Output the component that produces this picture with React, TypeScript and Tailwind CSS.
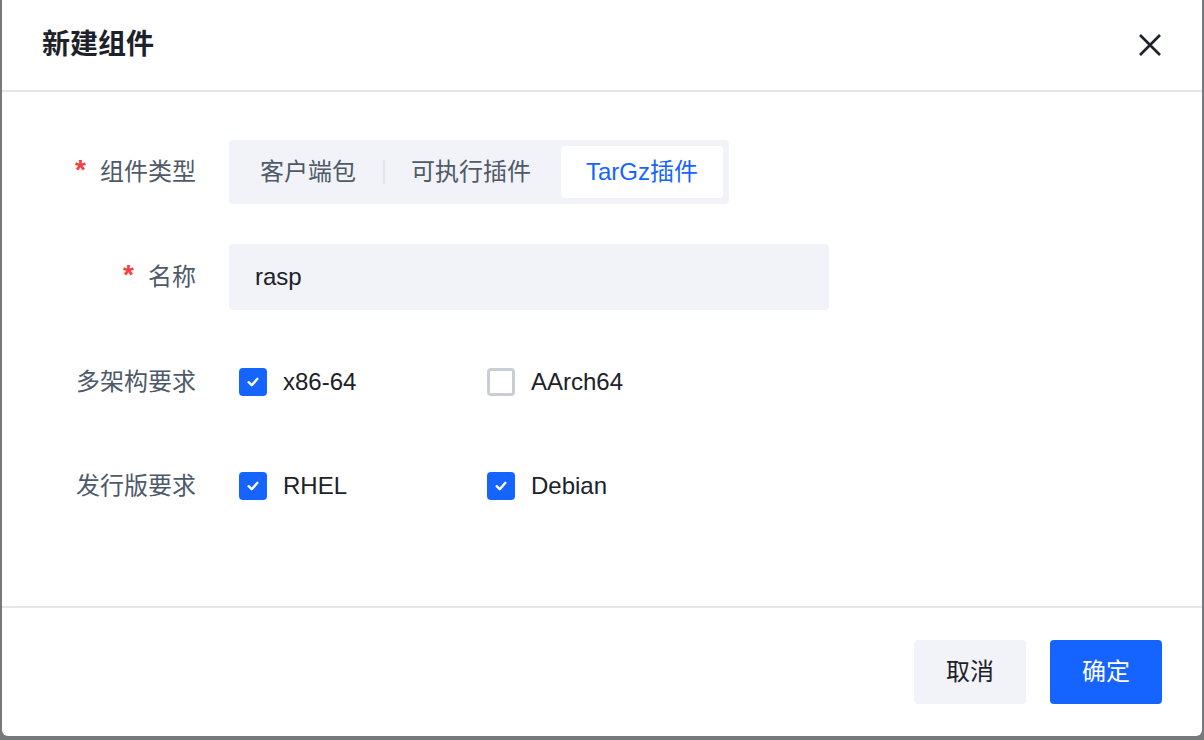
import { useState } from "react";

const font = {
  fontFamily: '"Liberation Sans", "Noto Sans CJK SC", sans-serif',
};

const Check = ({ checked, label }: { checked: boolean; label: string }) => (
  <div className="flex w-[248px] items-center gap-4">
    {checked ? (
      <span className="flex h-[28px] w-[28px] items-center justify-center rounded-[4px] bg-[#1664ff]">
        <svg width="16" height="16" viewBox="0 0 16 16" fill="none">
          <path
            d="M3.6 8.2 L6.8 11.2 L12.4 4.8"
            stroke="#fff"
            strokeWidth="2.4"
            strokeLinecap="round"
            strokeLinejoin="round"
          />
        </svg>
      </span>
    ) : (
      <span className="h-[28px] w-[28px] rounded-[4px] border-[3px] border-[#c9cdd4] bg-white" />
    )}
    <span className="text-[24px] text-[#1d2129]">{label}</span>
  </div>
);

const Label = ({ text, required }: { text: string; required?: boolean }) => (
  <div className="flex w-[154px] shrink-0 items-center justify-end text-[24px] text-[#4e5969]">
    {required && (
      <span className="mr-[14px] mt-[-4px] text-[28px] font-bold leading-none text-[#f53f3f]">*</span>
    )}
    {text}
  </div>
);

export default function App() {
  const [kind] = useState(2);
  const tabs = ["客户端包", "可执行插件", "TarGz插件"];

  return (
    <div className="flex h-[740px] w-full bg-[#77797c] pb-[4px] pl-[2px] pr-[2px]" style={font}>
      <div className="flex flex-1 flex-col rounded-b-[6px] bg-white">
        <div className="flex h-[92px] items-center justify-between border-b-2 border-[#e5e6eb] px-[40px]">
          <h1 className="text-[28px] font-semibold text-[#1d2129]">新建组件</h1>
          <svg width="24" height="24" viewBox="0 0 24 24">
            <path d="M2 2 L22 22 M22 2 L2 22" stroke="#1d2129" strokeWidth="2.6" />
          </svg>
        </div>

        <div className="flex flex-1 flex-col gap-10 px-[40px] pt-[48px]">
          <div className="flex h-[64px] items-center gap-[33px]">
            <Label text="组件类型" required />
            <div className="flex h-[64px] items-center rounded-[4px] bg-[#f2f3f8] p-[6px]">
              {tabs.map((t, i) => (
                <div key={t} className="flex h-full items-center">
                  {i > 0 && (
                    <div className="flex h-full w-[5px] items-center justify-center">
                      {i !== kind && i - 1 !== kind && <span className="h-[24px] w-[2px] bg-[#e5e6eb]" />}
                    </div>
                  )}
                  <div
                    className={
                      i === kind
                        ? "flex h-full items-center rounded-[4px] bg-white px-[25px] text-[24px] text-[#1664ff]"
                        : "flex h-full items-center px-[25px] text-[24px] text-[#4e5969]"
                    }
                  >
                    {t}
                  </div>
                </div>
              ))}
            </div>
          </div>

          <div className="flex h-[66px] items-center gap-[33px]">
            <Label text="名称" required />
            <div className="flex h-[66px] w-[600px] items-center rounded-[4px] bg-[#f2f3f8] px-[26px] text-[24px] text-[#1d2129]">
              rasp
            </div>
          </div>

          <div className="flex h-[64px] items-center gap-[33px]">
            <Label text="多架构要求" />
            <div className="flex pl-[10px]">
              <Check checked label="x86-64" />
              <Check checked={false} label="AArch64" />
            </div>
          </div>

          <div className="flex h-[64px] items-center gap-[33px]">
            <Label text="发行版要求" />
            <div className="flex pl-[10px]">
              <Check checked label="RHEL" />
              <Check checked label="Debian" />
            </div>
          </div>
        </div>

        <div className="flex items-center justify-end gap-6 border-t-2 border-[#e5e6eb] px-[40px] py-[32px]">
          <button className="h-[64px] w-[112px] rounded-[4px] bg-[#f2f3f8] text-[24px] text-[#1d2129]">取消</button>
          <button className="h-[64px] w-[112px] rounded-[4px] bg-[#1664ff] text-[24px] text-white">确定</button>
        </div>
      </div>
    </div>
  );
}
